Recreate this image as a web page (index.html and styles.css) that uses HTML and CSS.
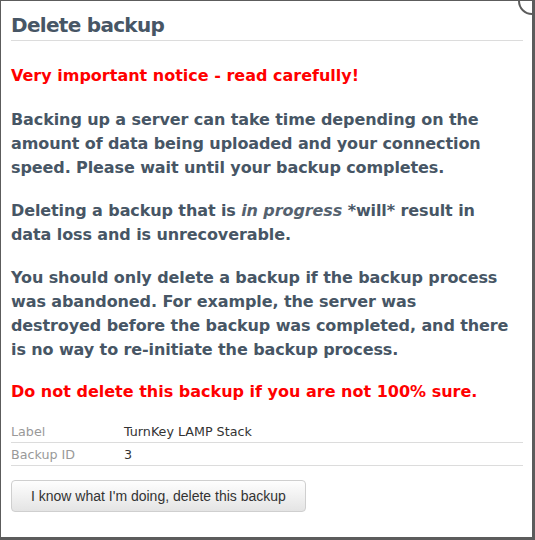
FILE: index.html
```html
<!DOCTYPE html>
<html>
<head>
<meta charset="utf-8">
<link rel="stylesheet" href="styles.css">
</head>
<body>
<div class="window">
  <span class="corner"></span>
  <h1 class="title">Delete backup</h1>
  <p class="notice">Very important notice - read carefully!</p>
  <p class="para first">Backing up a server can take time depending on the amount of data being uploaded and your connection speed. Please wait until your backup completes.</p>
  <p class="para">Deleting a backup that is <em>in progress</em> *will* result in data loss and is unrecoverable.</p>
  <p class="para">You should only delete a backup if the backup process was abandoned. For example, the server was destroyed before the backup was completed, and there is no way to re-initiate the backup process.</p>
  <p class="notice final">Do not delete this backup if you are not 100% sure.</p>
  <div class="details">
    <div class="row"><span class="key">Label</span><span class="val">TurnKey LAMP Stack</span></div>
    <div class="row"><span class="key">Backup ID</span><span class="val">3</span></div>
  </div>
  <button class="btn">I know what I'm doing, delete this backup</button>
</div>
</body>
</html>
```
FILE: styles.css
```css
html, body {
  margin: 0;
  padding: 0;
  background: #fff;
}
.window {
  position: relative;
  box-sizing: border-box;
  width: 535px;
  height: 540px;
  border-left: 1px solid #5c5c5c;
  border-top: 1px solid #5c5c5c;
  border-right: 3px solid #5c5c5c;
  border-bottom: 3px solid #5c5c5c;
  padding: 10px 9px 0 10px;
  font-family: "DejaVu Sans", Verdana, sans-serif;
  color: #475665;
  overflow: hidden;
}
.corner {
  position: absolute;
  top: -14px;
  right: -14px;
  width: 24px;
  height: 24px;
  border-radius: 50%;
  border: 2px solid #5c5c5c;
  background: #fff;
}
.title {
  margin: 0;
  font-size: 20px;
  line-height: 28px;
  letter-spacing: -0.7px;
  font-weight: bold;
  padding-bottom: 1px;
  border-bottom: 1px solid #dcdcdc;
}
.notice {
  color: #ff0000;
  font-weight: bold;
  font-size: 16px;
  line-height: 24px;
  margin: 23px 0 0 0;
}
.notice.final {
  margin-top: 18px;
}
.para {
  max-width: 500px;
  font-weight: bold;
  font-size: 16px;
  line-height: 24px;
  letter-spacing: -0.1px;
  margin: 19px 0 0 0;
}
.para.first {
  margin-top: 20px;
}
.para em {
  font-style: italic;
  font-weight: bold;
  color: #55626f;
}
.details {
  margin-top: 16px;
  font-size: 12.7px;
}
.row {
  display: flex;
  height: 22px;
  align-items: center;
  border-bottom: 1px solid #dcdcdc;
}
.key {
  width: 113px;
  color: #999;
}
.val {
  color: #333;
}
.btn {
  margin-top: 14px;
  height: 32px;
  padding: 0 19px;
  font-family: "Liberation Sans", Arial, sans-serif;
  font-size: 14px;
  color: #333;
  background: linear-gradient(#fefefe, #e4e4e4);
  border: 1px solid #cfcfcf;
  border-radius: 4px;
}
```
